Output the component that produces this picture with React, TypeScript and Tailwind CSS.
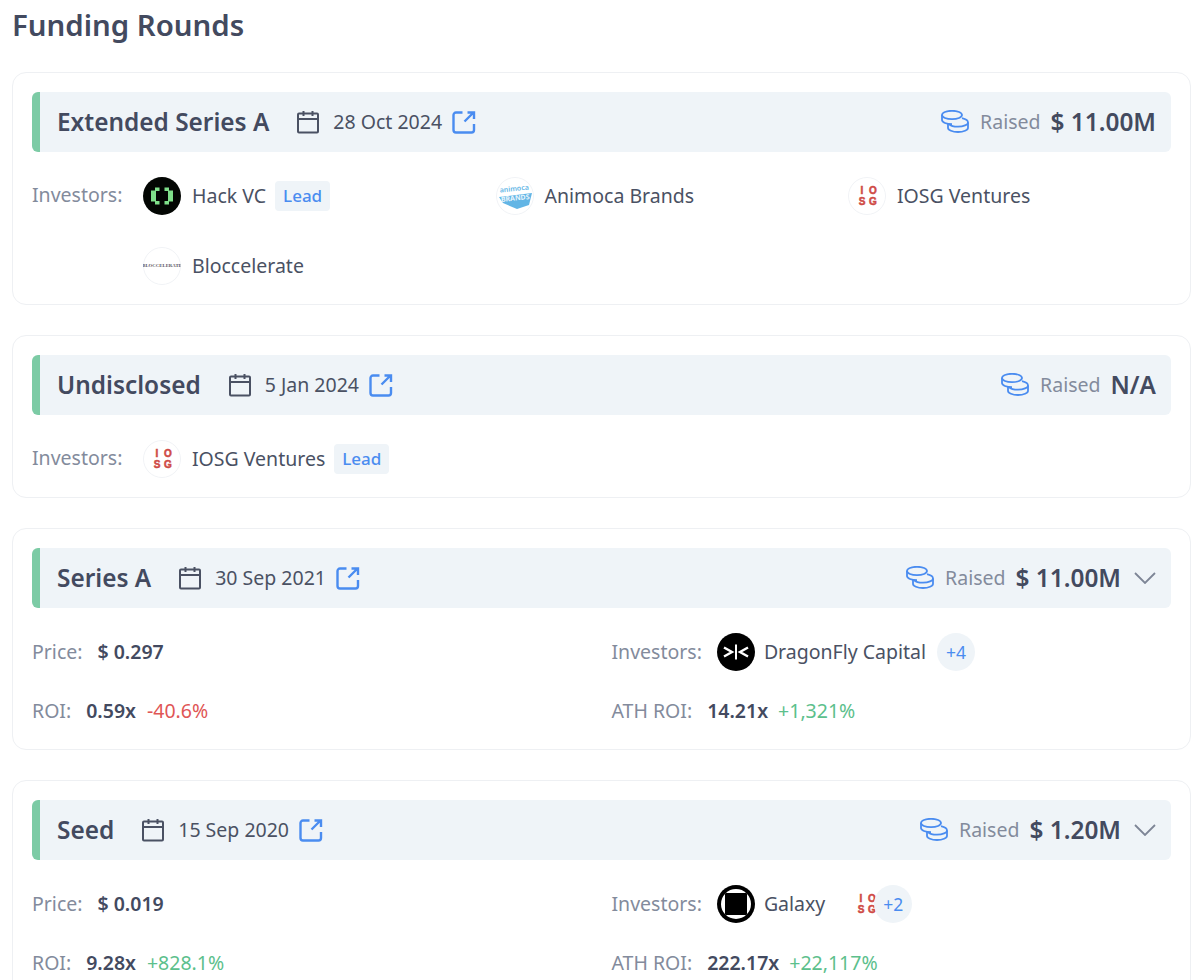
import type { ReactNode } from 'react'

function CoinsIcon() {
  return (
    <svg viewBox="0 0 28 24" className="h-6 w-7 shrink-0" fill="none" stroke="#4a8cf0" strokeWidth="1.8">
      <ellipse cx="11" cy="5" rx="10" ry="4.200" />
      <path d="M1 5v5c0 2.300 4.500 4.200 10 4.200" />
      <path d="M21 8.200c3.500.8 6 2.300 6 4.200 0 2.400-4.500 4.300-10 4.300-4 0-7.500-1-9-2.600" />
      <path d="M27 12.400v5.300c0 2.400-4.500 4.300-10 4.300s-10-1.900-10-4.300v-4.500" />
    </svg>
  )
}

function CalendarIcon() {
  return (
    <svg viewBox="0 0 24 24" className="h-6 w-6 shrink-0" fill="none" stroke="#4a5163" strokeWidth="2">
      <rect x="2" y="3.500" width="20" height="19" rx="1" />
      <path d="M2 9h20M7.500 1v5M16.500 1v5" />
    </svg>
  )
}

function ExternalIcon() {
  return (
    <svg viewBox="0 0 24 24" className="h-6 w-6 shrink-0" fill="none" stroke="#4a8cf0" strokeWidth="2.400">
      <path d="M10.500 2.500H4A2.500 2.500 0 0 0 1.500 5v15A2.500 2.500 0 0 0 4 22.500h15.500A2.500 2.500 0 0 0 22 20v-6" />
      <path d="M12.500 11.500L21 3M15.500 2.500h6.500v6.500" />
    </svg>
  )
}

function ChevronIcon() {
  return (
    <svg viewBox="0 0 22 12" className="ml-[13px] h-3 w-[22px] shrink-0" fill="none" stroke="#7d8596" strokeWidth="1.800">
      <path d="M1 1l10 10L21 1" />
    </svg>
  )
}

function HackLogo() {
  return (
    <svg viewBox="0 0 38 38" className="h-[38px] w-[38px] shrink-0">
      <circle cx="19" cy="19" r="19" fill="#030603" />
      <path d="M16.500 10.500H12v3H8v11h4v3h4.500V24H13V14h3.500z" fill="#7fe08a" />
      <path d="M21.500 10.500H26v3h4v11h-4v3h-4.500V24H25V14h-3.500z" fill="#7fe08a" />
    </svg>
  )
}

function IosgLogo({ ring = true }: { ring?: boolean }) {
  return (
    <svg viewBox="0 0 38 38" className="h-[38px] w-[38px] shrink-0">
      {ring && <circle cx="19" cy="19" r="18.500" fill="#fff" stroke="#f1f3f6" />}
      <g
        fontFamily="'Liberation Sans', sans-serif"
        fontSize="10"
        fontWeight="700"
        fill="#cf4a45"
        stroke="#cf4a45"
        strokeWidth="0.500"
        textAnchor="middle"
      >
        <text x="14" y="16.500">I</text>
        <text x="25" y="16.500">O</text>
        <text x="14" y="28">S</text>
        <text x="25" y="28">G</text>
      </g>
    </svg>
  )
}

function AnimocaLogo() {
  return (
    <svg viewBox="0 0 38 38" className="h-[38px] w-[38px] shrink-0">
      <circle cx="19" cy="19" r="18.500" fill="#fff" stroke="#f1f3f6" />
      <path d="M3 20l33-4-3 12-12 4-14-6z" fill="#62b5e5" />
      <g transform="rotate(-6 19 19)">
        <text x="19" y="14" textAnchor="middle" fontFamily="'Noto Sans', sans-serif" fontSize="7" fontWeight="600" fill="#62b5e5">
          animoca
        </text>
        <text x="19" y="23.500" textAnchor="middle" fontFamily="'Noto Sans', sans-serif" fontSize="7" fontWeight="700" fill="#eaf6fc">
          BRANDS
        </text>
      </g>
    </svg>
  )
}

function BloccelerateLogo() {
  return (
    <svg viewBox="0 0 38 38" className="h-[38px] w-[38px] shrink-0">
      <circle cx="19" cy="19" r="18.500" fill="#fff" stroke="#f1f3f6" />
      <text x="19" y="20" textAnchor="middle" fontFamily="'Liberation Serif', serif" fontSize="4.800" fontWeight="700" fill="#5a5560">
        BLOCCELERATE
      </text>
    </svg>
  )
}

function DragonflyLogo() {
  return (
    <svg viewBox="0 0 38 38" className="h-[38px] w-[38px] shrink-0">
      <circle cx="19" cy="19" r="19" fill="#000" />
      <path d="M7 14.500l8 4.500-8 4.500M31 14.500l-8 4.500 8 4.500" fill="none" stroke="#fff" strokeWidth="2.400" />
      <path d="M19 11.500v15" stroke="#fff" strokeWidth="2" />
    </svg>
  )
}

function GalaxyLogo() {
  return (
    <svg viewBox="0 0 38 38" className="h-[38px] w-[38px] shrink-0">
      <circle cx="19" cy="19" r="19" fill="#000" />
      <circle cx="19" cy="19" r="15" fill="#fff" />
      <rect x="8" y="8" width="22" height="22" rx="1" fill="#000" />
    </svg>
  )
}

function RoundHeader({
  title,
  date,
  raised,
  collapsible,
}: {
  title: string
  date: string
  raised: string
  collapsible?: boolean
}) {
  return (
    <div className="flex h-[60px] items-center rounded-md border-l-[8px] border-[#7ccba5] bg-[#eff4f8] pl-[17px] pr-[15px]">
      <span className="text-[24.400px] font-semibold text-[#434a5f]">{title}</span>
      <span className="ml-[27px]">
        <CalendarIcon />
      </span>
      <span className="ml-[13px] text-[19.500px] text-[#4a5163]">{date}</span>
      <span className="ml-[10px]">
        <ExternalIcon />
      </span>
      <div className="ml-auto flex items-center">
        <CoinsIcon />
        <span className="ml-[11px] text-[19.500px] text-[#838b9c]">Raised</span>
        <span className="ml-[10px] text-[24.400px] font-semibold text-[#434a5f]">{raised}</span>
        {collapsible && <ChevronIcon />}
      </div>
    </div>
  )
}

function Investor({ logo, name, lead }: { logo: ReactNode; name: string; lead?: boolean }) {
  return (
    <div className="flex h-[38px] items-center">
      {logo}
      <span className="ml-[11px] text-[19.500px] text-[#4a5163]">{name}</span>
      {lead && (
        <span className="ml-[9px] rounded bg-[#eff4f8] px-2 py-[2px] text-[17px] font-medium text-[#4a8cf0]">Lead</span>
      )}
    </div>
  )
}

function Stat({ label, children }: { label: string; children: ReactNode }) {
  return (
    <div className="flex h-[38px] items-center text-[19.500px]">
      <span className="mr-[15px] text-[#838b9c]">{label}</span>
      {children}
    </div>
  )
}

function PriceBlock({
  price,
  roi,
  roiChange,
  down,
  ath,
  athChange,
  investors,
}: {
  price: string
  roi: string
  roiChange: string
  down?: boolean
  ath: string
  athChange: string
  investors: ReactNode
}) {
  return (
    <div className="mt-[25px] grid grid-cols-2 gap-x-5 gap-y-[21px]">
      <Stat label="Price:">
        <span className="font-semibold text-[#434a5f]">{price}</span>
      </Stat>
      <Stat label="Investors:">{investors}</Stat>
      <Stat label="ROI:">
        <span className="font-semibold text-[#434a5f]">{roi}</span>
        <span className={`ml-[11px] ${down ? 'text-[#e05656]' : 'text-[#5cc08c]'}`}>{roiChange}</span>
      </Stat>
      <Stat label="ATH ROI:">
        <span className="font-semibold text-[#434a5f]">{ath}</span>
        <span className="ml-[10px] text-[#5cc08c]">{athChange}</span>
      </Stat>
    </div>
  )
}

function MoreBadge({ count }: { count: number }) {
  return (
    <span className="grid h-[38px] w-[38px] shrink-0 place-items-center rounded-full bg-[#eff4f8] text-[17.500px] text-[#4a8cf0]">
      +{count}
    </span>
  )
}

function Card({ children }: { children: ReactNode }) {
  return <div className="rounded-[14px] border border-[#eef0f3] bg-white p-[19px]">{children}</div>
}

export default function App() {
  return (
    <div className="w-[1200px] bg-white pl-3 pr-[9px] font-['Noto_Sans',sans-serif]">
      <h2 className="pb-[28px] pt-[6px] text-[29.400px] leading-[38px] font-semibold text-[#434a5f]">Funding Rounds</h2>
      <div className="flex flex-col gap-[30px]">
        <Card>
          <RoundHeader title="Extended Series A" date="28 Oct 2024" raised="$ 11.00M" />
          <div className="mt-[25px] flex">
            <span className="w-[111px] pt-[3px] text-[19.500px] text-[#838b9c]">Investors:</span>
            <div className="grid flex-1 grid-cols-[352.500px_352.500px_1fr] gap-y-8">
              <Investor logo={<HackLogo />} name="Hack VC" lead />
              <Investor logo={<AnimocaLogo />} name="Animoca Brands" />
              <Investor logo={<IosgLogo />} name="IOSG Ventures" />
              <Investor logo={<BloccelerateLogo />} name="Bloccelerate" />
            </div>
          </div>
        </Card>
        <Card>
          <RoundHeader title="Undisclosed" date="5 Jan 2024" raised="N/A" />
          <div className="mt-[25px] flex">
            <span className="w-[111px] pt-[3px] text-[19.500px] text-[#838b9c]">Investors:</span>
            <Investor logo={<IosgLogo />} name="IOSG Ventures" lead />
          </div>
        </Card>
        <Card>
          <RoundHeader title="Series A" date="30 Sep 2021" raised="$ 11.00M" collapsible />
          <PriceBlock
            price="$ 0.297"
            roi="0.59x"
            roiChange="-40.6%"
            down
            ath="14.21x"
            athChange="+1,321%"
            investors={
              <>
                <DragonflyLogo />
                <span className="ml-[9px] text-[#4a5163]">DragonFly Capital</span>
                <span className="ml-[11px]">
                  <MoreBadge count={4} />
                </span>
              </>
            }
          />
        </Card>
        <Card>
          <RoundHeader title="Seed" date="15 Sep 2020" raised="$ 1.20M" collapsible />
          <PriceBlock
            price="$ 0.019"
            roi="9.28x"
            roiChange="+828.1%"
            ath="222.17x"
            athChange="+22,117%"
            investors={
              <>
                <GalaxyLogo />
                <span className="ml-[9px] text-[#4a5163]">Galaxy</span>
                <span className="ml-[22px] flex items-center">
                  <IosgLogo ring={false} />
                  <span className="-ml-[11px]">
                    <MoreBadge count={2} />
                  </span>
                </span>
              </>
            }
          />
        </Card>
      </div>
    </div>
  )
}
